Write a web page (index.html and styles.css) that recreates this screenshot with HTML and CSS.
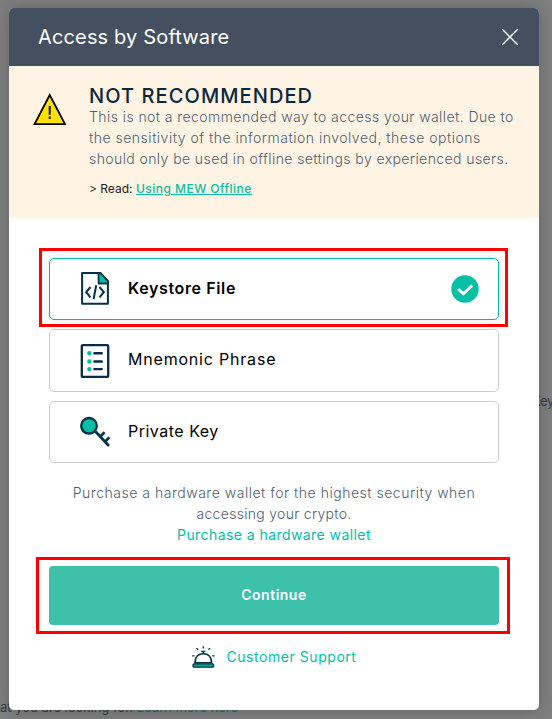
FILE: index.html
```html
<!DOCTYPE html>
<html lang="en">
<head>
    <meta charset="UTF-8">
    <meta name="viewport" content="width=device-width, initial-scale=1.0">
    <title>Access by Software</title>
    <link rel="stylesheet" href="styles.css">
</head>
<body>
    <span class="behind behind-key">Key</span>
    <span class="behind behind-footer">at you are looking for. <span class="behind-link">Learn more here</span></span>
    <div class="modal">
        <header class="modal-header">
            <h1 class="title">Access by Software</h1>
            <button class="close" type="button" aria-label="Close">
                <svg width="18" height="18" viewBox="0 0 18 18"><path d="M1.3 1.3 16.7 16.7M16.7 1.3 1.3 16.7" fill="none" stroke="#fff" stroke-width="1.4"/></svg>
            </button>
        </header>
        <div class="warning">
            <svg class="warning-icon" width="34" height="33" viewBox="0 0 34 33">
                <path d="M16.7 2 32 31.2H1.6Z" fill="#ffe100" stroke="#000" stroke-width="1.8"/>
                <path d="M16.7 13v8.7M16.7 23.6v2.5" stroke="#111" stroke-width="2"/>
            </svg>
            <div class="warning-text">
                <h2>NOT RECOMMENDED</h2>
                <p>This is not a recommended way to access your wallet. Due to<br><span class="line-2">the sensitivity of the information involved, these options</span><br><span class="line-3">should only be used in offline settings by experienced users.</span></p>
                <div class="read">&gt; Read: <a href="#">Using MEW Offline</a></div>
            </div>
        </div>
        <div class="content">
            <div class="options">
                <div class="option selected">
                    <svg class="option-icon" width="32" height="36" viewBox="0 0 32 36">
                        <path d="M2.1 2h18.2l7.6 8.3v22.4H2.1Z" fill="#fff" stroke="#053249" stroke-width="2" stroke-linejoin="round"/>
                        <path d="M18.6 2v10.5h9.4V10.3L20.3 2Z" fill="#05c0a5" stroke="#053249" stroke-width="1.8" stroke-linejoin="round"/>
                        <path d="m10.5 16-4.3 5.2 4.3 5.2M19.5 16l4.3 5.2-4.3 5.2M16.2 14.3l-2.6 14" fill="none" stroke="#053249" stroke-width="2"/>
                    </svg>
                    <span class="name">Keystore File</span>
                    <svg class="check" width="28" height="28" viewBox="0 0 28 28">
                        <circle cx="14" cy="14" r="13.7" fill="#05c0a5"/>
                        <path d="m7.3 14.1 5 4.7 8.8-8.3" fill="none" stroke="#fff" stroke-width="3"/>
                    </svg>
                </div>
                <div class="option mnemonic">
                    <svg class="option-icon" width="32" height="36" viewBox="0 0 32 36">
                        <rect x="1.8" y="2.1" width="26.4" height="31.8" rx="1" fill="#fff" stroke="#0b2b45" stroke-width="2.3"/>
                        <g fill="#05c0a5"><circle cx="9.4" cy="10.3" r="2.2"/><circle cx="9.4" cy="18.5" r="2.2"/><circle cx="9.4" cy="26.1" r="2.2"/></g>
                        <path d="M14.4 10.3h7.3M14.4 18.5h7.3M14.4 26.1h7.3" stroke="#0b2b45" stroke-width="2.4" stroke-linecap="round"/>
                    </svg>
                    <span class="name">Mnemonic Phrase</span>
                </div>
                <div class="option private">
                    <svg class="option-icon" width="32" height="36" viewBox="0 0 32 36">
                        <path d="M15.5 17.5 29 32M20.2 22.6l4.4-4.3M25 27.7l4.4-4.3" fill="none" stroke="#053249" stroke-width="2.7"/>
                        <circle cx="9" cy="11.8" r="7.8" fill="#05c0a5" stroke="#053249" stroke-width="2.3"/>
                    </svg>
                    <span class="name">Private Key</span>
                </div>
            </div>
            <p class="purchase">Purchase a hardware wallet for the highest security when<br><span class="short-line">accessing your crypto.</span><br><a class="buy-link" href="#">Purchase a hardware wallet</a></p>
            <button class="continue" type="button">Continue</button>
            <a class="support" href="#">
                <svg width="24" height="24" viewBox="0 0 24 24" fill="none" stroke="#053249">
                    <rect x="1" y="18.8" width="20.6" height="3.4" rx="1.2" fill="#05a892" stroke-width="1.3"/>
                    <path d="M3 17.8c.2-6.2 3.3-9.1 8.3-9.1s8.1 2.9 8.3 9.1Z" stroke-width="1.6"/>
                    <path d="M11.3 6.2v2.5M9.2 6.5h4.2" stroke-width="1.5"/>
                    <path d="M11.3 1.2v2.4M4.5 3.1l1.6 1.7M18.1 3.1l-1.6 1.7M.2 10.8h2.3M20.2 10.8h2.3" stroke-width="1.3"/>
                </svg>
                <span>Customer Support</span>
            </a>
        </div>
    </div>
    <!-- red highlight frames -->
    <div class="frame frame-option"></div>
    <div class="frame frame-button"></div>
</body>
</html>
```
FILE: styles.css
```css
*{
    box-sizing: border-box;
    margin: 0;
    padding: 0;
}

body{
    position: relative;
    height: 719px;
    padding: 8px 13px 9px 9px;
    overflow: hidden;
    background: #7f7f7f;
    font-family: Inter, "Noto Sans", sans-serif;
    font-size: 16px;
    color: #000;
}

button{
    border: none;
    font-family: inherit;
}

svg{
    display: block;
    flex: none;
}

.behind{
    position: absolute;
    font-size: 14px;
    line-height: 20px;
    color: #353d4a;
    white-space: nowrap;
}

.behind-key{
    left: 532px;
    top: 391px;
    font-size: 13px;
    letter-spacing: -.3px;
}

.behind-footer{
    left: 0;
    top: 697px;
    font-size: 13px;
}

.behind-link{
    color: #087668;
}

.modal{
    position: relative;
    width: 530px;
    height: 702px;
    overflow: hidden;
    background: #fff;
    border-radius: 5px;
    box-shadow: 0 0 16px rgba(0, 0, 0, .22);
}

.modal-header{
    display: flex;
    justify-content: space-between;
    align-items: center;
    height: 58px;
    padding: 0 20px 0 29px;
    background: #444f60;
    color: #fff;
}

.title{
    font-size: 20px;
    font-weight: 400;
    letter-spacing: .15px;
}

.close{
    background: none;
}

.warning{
    display: flex;
    height: 152px;
    padding: 19px 0 0 24px;
    background: #fff4e3;
}

.warning-icon{
    margin: 8px 22px 0 0;
}

.warning-text{
    white-space: nowrap;
}

.warning h2{
    font-size: 20px;
    font-weight: 500;
    line-height: 22px;
    letter-spacing: 1.08px;
    color: #0b2840;
}

.warning p{
    margin-top: -1px;
    font-size: 14px;
    font-weight: 300;
    line-height: 21px;
    letter-spacing: .43px;
    color: #505e70;
}

.warning .line-2{
    letter-spacing: .51px;
}

.warning .line-3{
    letter-spacing: .41px;
}

.read{
    margin-top: 12px;
    font-size: 12px;
    line-height: 16px;
    color: #222;
}

a{
    color: #05c0a5;
    text-decoration: none;
}

.read a{
    font-weight: 500;
    letter-spacing: .48px;
    text-decoration: underline;
}

.content{
    padding: 40px 40px 0;
}

.options{
    display: flex;
    flex-direction: column;
    gap: 9px;
}

.option{
    display: flex;
    align-items: center;
    height: 62px;
    padding: 0 19px 0 30px;
    border: 1px solid #ccc;
    border-radius: 5px;
}

.option.selected{
    border-color: #05b99f;
    box-shadow: 0 0 12px rgba(0, 0, 0, .09);
}

.mnemonic{
    height: 63px;
}

.option-icon{
    margin-right: 16px;
}

.name{
    padding-bottom: 2px;
    font-size: 16px;
    letter-spacing: .8px;
}

.selected .name{
    font-weight: 600;
    letter-spacing: .62px;
}

.mnemonic .name{
    padding-bottom: 3px;
}

.private .name{
    letter-spacing: .5px;
}

.check{
    margin-left: auto;
}

.purchase{
    margin-top: 19px;
    font-size: 14px;
    font-weight: 300;
    line-height: 21px;
    letter-spacing: .52px;
    text-align: center;
    white-space: nowrap;
    color: #505e70;
}

.short-line{
    letter-spacing: .3px;
}

.buy-link{
    font-weight: 400;
    letter-spacing: .43px;
}

.continue{
    display: block;
    width: 450px;
    height: 59px;
    margin-top: 21px;
    padding-bottom: 2px;
    background: #3dc1aa;
    border-radius: 4px;
    font-size: 14px;
    font-weight: 600;
    letter-spacing: .5px;
    color: #fff;
}

.support{
    display: flex;
    justify-content: center;
    align-items: center;
    gap: 10px;
    margin-top: 20px;
    padding-left: 1px;
    font-size: 14px;
    letter-spacing: .55px;
}

.support span{
    padding-bottom: 2px;
}

.frame{
    position: absolute;
    border: 3px solid #f00;
}

.frame-option{
    left: 39px;
    top: 248px;
    width: 469px;
    height: 79px;
}

.frame-button{
    left: 36px;
    top: 557px;
    width: 474px;
    height: 77px;
}
```
